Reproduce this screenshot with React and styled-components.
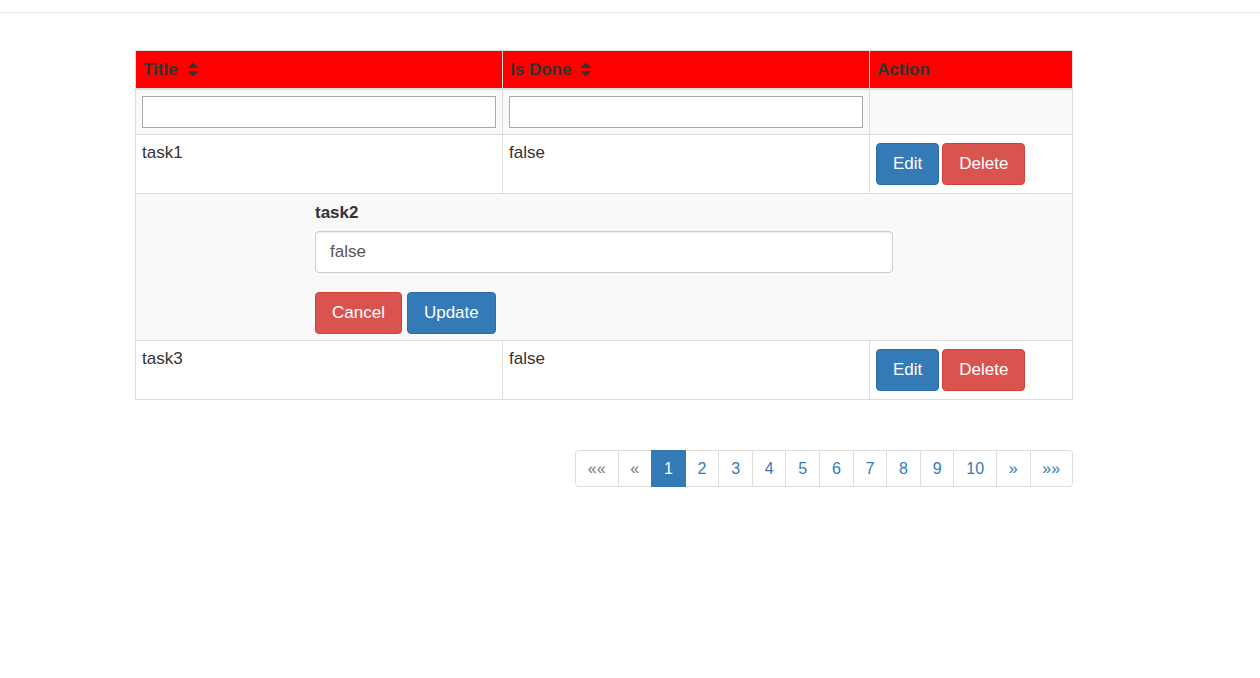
import React from "react";
import styled, { createGlobalStyle } from "styled-components";

const GlobalStyle = createGlobalStyle`
  html, body {
    margin: 0;
    padding: 0;
    background: #fff;
  }
  body {
    font-family: "Liberation Sans", Arial, sans-serif;
    font-size: 16px;
    line-height: 1.42857;
    color: #333;
  }
  * {
    box-sizing: border-box;
  }
`;

const TopBar = styled.div`
  height: 13px;
  border-bottom: 1px solid #e7e7e7;
`;

const Page = styled.div`
  padding: 37px 0 0 135px;
`;

const Table = styled.table`
  width: 937px;
  border-collapse: collapse;
  border: 1px solid #ddd;
  table-layout: fixed;
  font-size: 17px;
`;

const HeadCell = styled.th`
  background: #ff0000;
  color: #333;
  font-weight: bold;
  text-align: left;
  padding: 7px 7px;
  line-height: 23px;
  border: 1px solid #ddd;
  border-bottom: 2px solid #ddd;
  width: ${(p) => p.$w}px;
`;

const SortIcon = styled.svg`
  display: inline-block;
  vertical-align: middle;
  margin-left: 9px;
  margin-top: -3px;
`;

const FilterRow = styled.tr`
  background: #f9f9f9;
`;

const FilterCell = styled.td`
  padding: 6px;
  border: 1px solid #ddd;
`;

const FilterInput = styled.input`
  display: block;
  width: 100%;
  height: 32px;
  border: 1px solid #a9a9a9;
  background: #fff;
  font: inherit;
  padding: 0 6px;
`;

const Cell = styled.td`
  padding: 8px 6px;
  vertical-align: top;
  border: 1px solid #ddd;
  line-height: 20px;
`;

const Button = styled.button`
  display: inline-block;
  font-family: "Liberation Sans", Arial, sans-serif;
  font-size: 17px;
  line-height: 20px;
  padding: 10px 16px;
  border-radius: 4px;
  color: #fff;
  cursor: pointer;
  background: ${(p) => (p.$kind === "danger" ? "#d9534f" : "#337ab7")};
  border: 1px solid ${(p) => (p.$kind === "danger" ? "#d43f3a" : "#2e6da4")};
  margin-right: ${(p) => p.$gap || 0}px;
`;

const EditRow = styled.tr`
  background: #f9f9f9;
`;

const EditCell = styled.td`
  border: 1px solid #ddd;
  padding: 7px 0 6px 179px;
`;

const EditLabel = styled.div`
  font-weight: bold;
  line-height: 23px;
  margin-bottom: 7px;
`;

const EditInput = styled.input`
  display: block;
  width: 578px;
  height: 42px;
  padding: 0 14px;
  font-family: "Liberation Sans", Arial, sans-serif;
  font-size: 17px;
  color: #555;
  background: #fff;
  border: 1px solid #ccc;
  border-radius: 4px;
  box-shadow: inset 0 1px 1px rgba(0, 0, 0, 0.075);
  margin-bottom: 19px;
`;

const ButtonRow = styled.div`
  display: flex;
  gap: 5px;
`;

const PagerWrap = styled.div`
  width: 938px;
  display: flex;
  justify-content: flex-end;
  margin-top: 50px;
`;

const Pager = styled.ul`
  display: flex;
  list-style: none;
  margin: 0;
  padding: 0;
`;

const PageItem = styled.li`
  padding: 6px 11.85px;
  line-height: 23px;
  font-size: 16px;
  border: 1px solid ${(p) => (p.$active ? "#337ab7" : "#ddd")};
  margin-left: -1px;
  background: ${(p) => (p.$active ? "#337ab7" : "#fff")};
  color: ${(p) => (p.$active ? "#fff" : p.$muted ? "#777" : "#337ab7")};
  position: relative;
  z-index: ${(p) => (p.$active ? 2 : 1)};
  min-width: ${(p) => p.$w || 0}px;
  text-align: center;
  &:first-child {
    margin-left: 0;
    border-radius: 4px 0 0 4px;
  }
  &:last-child {
    border-radius: 0 4px 4px 0;
  }
`;

const Sort = () => (
  <SortIcon width="12" height="15" viewBox="0 0 12 15">
    <path d="M0.5 6 L6 0.5 L11.5 6 Z" fill="#333" />
    <path d="M0.5 9 L6 14.5 L11.5 9 Z" fill="#333" />
  </SortIcon>
);

const tasks = [
  { title: "task1", done: "false" },
  { title: "task2", done: "false", editing: true },
  { title: "task3", done: "false" },
];

const pages = [
  { label: "««", muted: true, w: 42 },
  { label: "«", muted: true },
  { label: "1", active: true },
  { label: "2" },
  { label: "3" },
  { label: "4" },
  { label: "5" },
  { label: "6" },
  { label: "7" },
  { label: "8" },
  { label: "9" },
  { label: "10" },
  { label: "»" },
  { label: "»»", w: 42 },
];

export default function App() {
  return (
    <>
      <GlobalStyle />
      <TopBar />
      <Page>
        <Table>
          <thead>
            <tr>
              <HeadCell $w={367}>
                Title
                <Sort />
              </HeadCell>
              <HeadCell $w={367}>
                Is Done
                <Sort />
              </HeadCell>
              <HeadCell $w={203}>Action</HeadCell>
            </tr>
          </thead>
          <tbody>
            <FilterRow>
              <FilterCell>
                <FilterInput />
              </FilterCell>
              <FilterCell>
                <FilterInput />
              </FilterCell>
              <FilterCell />
            </FilterRow>
            {tasks.map((t) =>
              t.editing ? (
                <EditRow key={t.title}>
                  <EditCell colSpan={3}>
                    <EditLabel>{t.title}</EditLabel>
                    <EditInput defaultValue={t.done} />
                    <ButtonRow>
                      <Button $kind="danger">Cancel</Button>
                      <Button>Update</Button>
                    </ButtonRow>
                  </EditCell>
                </EditRow>
              ) : (
                <tr key={t.title}>
                  <Cell>{t.title}</Cell>
                  <Cell>{t.done}</Cell>
                  <Cell>
                    <Button $gap={3}>Edit</Button>
                    <Button $kind="danger">Delete</Button>
                  </Cell>
                </tr>
              )
            )}
          </tbody>
        </Table>
        <PagerWrap>
          <Pager>
            {pages.map((p) => (
              <PageItem key={p.label} $active={p.active} $muted={p.muted} $w={p.w}>
                {p.label}
              </PageItem>
            ))}
          </Pager>
        </PagerWrap>
      </Page>
    </>
  );
}
